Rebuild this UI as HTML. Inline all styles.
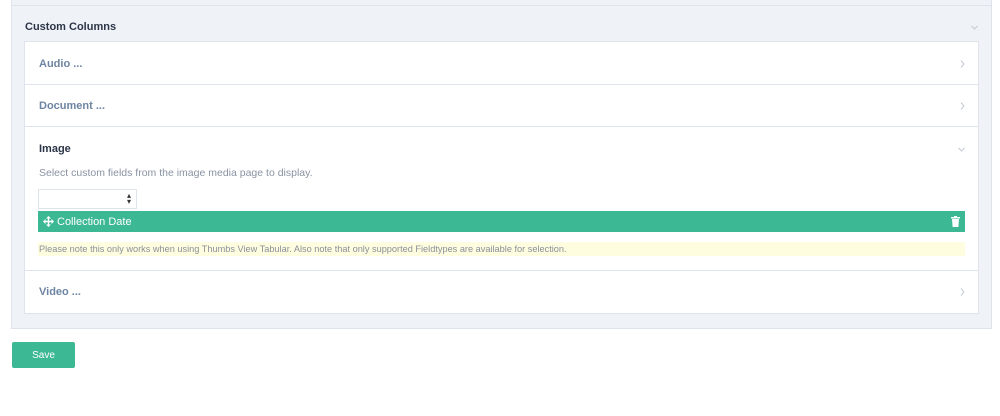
<!DOCTYPE html>
<html><head><meta charset="utf-8"><style>
*{box-sizing:border-box;margin:0;padding:0}
body{width:1000px;height:416px;background:#fff;font-family:"Liberation Sans",sans-serif;position:relative;overflow:hidden}
.outer{position:absolute;left:11px;top:-2px;width:981px;height:331px;background:#eff2f7;border:1px solid #dfe4ec}
.topline{position:absolute;left:12px;top:5px;width:979px;height:1px;background:#dfe4ec}
.h{position:absolute;left:25px;top:21px;font-size:11px;font-weight:bold;color:#2c3547}
.inner{position:absolute;left:24px;top:41px;width:955px;height:273px;background:#fff;border:1px solid #dfe4ec}
.row{position:absolute;left:0;width:953px;border-bottom:1px solid #dfe4ec}
.t{position:absolute;left:14px;font-size:11px;font-weight:bold;color:#6d84a3}
.chev{position:absolute;left:935px}
.sel{position:absolute;left:13px;top:147px;width:99px;height:20px;border:1px solid #dfe4ec;background:#fff}
.sel span{position:absolute;right:5px;top:3px;font-size:8px;color:#333;line-height:6px}
.bar{position:absolute;left:13px;top:169px;width:927px;height:21px;background:#3db894;color:#fff;font-size:11px;line-height:22px;padding-left:19px}
.note{position:absolute;left:13px;top:200px;width:927px;height:14px;background:#fffddf;color:#8a8f99;font-size:9.2px;line-height:14px;padding-left:1px;white-space:nowrap}
.save{position:absolute;left:12px;top:342px;width:63px;height:26px;background:#3db894;border-radius:2px;color:#fff;font-size:10px;line-height:28px;text-align:center}
</style></head><body>
<div class="outer"></div>
<div class="topline"></div>
<div class="h">Custom Columns</div>
<svg style="position:absolute;left:971px;top:25px" width="7" height="5" viewBox="0 0 7 5"><path d="M0.5 1 3.5 4 6.5 1" fill="none" stroke="#c4cad4" stroke-width="1"/></svg>
<div class="inner">
 <div class="row" style="top:0;height:43px"><div class="t" style="top:16px">Audio ...</div><svg class="chev" style="top:18px" width="5" height="8" viewBox="0 0 5 8"><path d="M1 0.5 4 4 1 7.5" fill="none" stroke="#c4cad4"/></svg></div>
 <div class="row" style="top:43px;height:42px"><div class="t" style="top:15px">Document ...</div><svg class="chev" style="top:17px" width="5" height="8" viewBox="0 0 5 8"><path d="M1 0.5 4 4 1 7.5" fill="none" stroke="#c4cad4"/></svg></div>
 <div class="row" style="top:85px;height:144px">
  <div class="t" style="top:16px;color:#2c3547">Image</div>
  <svg style="position:absolute;left:933px;top:20px" width="7" height="5" viewBox="0 0 7 5"><path d="M0.5 1 3.5 4 6.5 1" fill="none" stroke="#c4cad4"/></svg>
  <div style="position:absolute;left:14px;top:40px;font-size:10.5px;color:#8a93a3">Select custom fields from the image media page to display.</div>
 </div>
 <div class="sel"><span>▴<br>▾</span></div>
 <div class="bar"><svg style="position:absolute;left:5px;top:5px" width="11" height="11" viewBox="0 0 11 11" fill="#fff"><path d="M5.5 0 8 2.5H6.2V4.8H8.5V3L11 5.5 8.5 8V6.2H6.2V8.5H8L5.5 11 3 8.5H4.8V6.2H2.5V8L0 5.5 2.5 3V4.8H4.8V2.5H3Z"/></svg>Collection Date<svg style="position:absolute;right:5px;top:5px" width="9" height="11" viewBox="0 0 9 11" fill="#fff"><rect x="0" y="1" width="9" height="1.5"/><rect x="3" y="0" width="3" height="1.5"/><path d="M1 3H8L7.4 11H1.6Z"/></svg></div>
 <div class="note">Please note this only works when using Thumbs View Tabular. Also note that only supported Fieldtypes are available for selection.</div>
 <div class="row" style="top:229px;height:43px;border-bottom:none"><div class="t" style="top:15px">Video ...</div><svg class="chev" style="top:17px" width="5" height="8" viewBox="0 0 5 8"><path d="M1 0.5 4 4 1 7.5" fill="none" stroke="#c4cad4"/></svg></div>
</div>
<div class="save">Save</div>
</body></html>
